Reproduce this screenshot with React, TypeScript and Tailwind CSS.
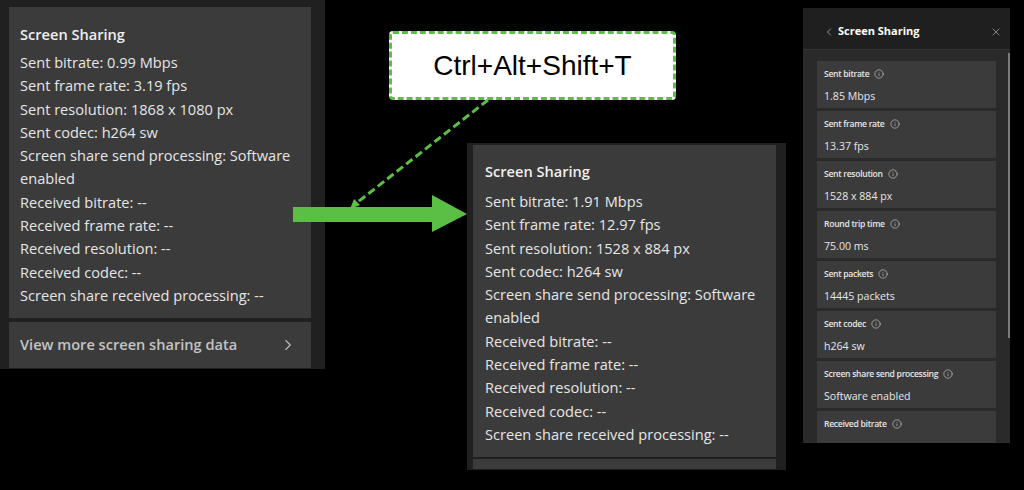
import React from "react";
import { ChevronLeft, ChevronRight, Info, X } from "lucide-react";

const font = { fontFamily: '"Segoe UI", "Open Sans", "Noto Sans", sans-serif' };

const leftLines = [
  "Sent bitrate: 0.99 Mbps",
  "Sent frame rate: 3.19 fps",
  "Sent resolution: 1868 x 1080 px",
  "Sent codec: h264 sw",
  "Screen share send processing: Software enabled",
  "Received bitrate: --",
  "Received frame rate: --",
  "Received resolution: --",
  "Received codec: --",
  "Screen share received processing: --",
];

const midLines = [
  "Sent bitrate: 1.91 Mbps",
  "Sent frame rate: 12.97 fps",
  "Sent resolution: 1528 x 884 px",
  "Sent codec: h264 sw",
  "Screen share send processing: Software enabled",
  "Received bitrate: --",
  "Received frame rate: --",
  "Received resolution: --",
  "Received codec: --",
  "Screen share received processing: --",
];

const cards = [
  { label: "Sent bitrate", value: "1.85 Mbps" },
  { label: "Sent frame rate", value: "13.37 fps" },
  { label: "Sent resolution", value: "1528 x 884 px" },
  { label: "Round trip time", value: "75.00 ms" },
  { label: "Sent packets", value: "14445 packets" },
  { label: "Sent codec", value: "h264 sw" },
  { label: "Screen share send processing", value: "Software enabled" },
  { label: "Received bitrate", value: "" },
];

const StatsList = ({ lines }: { lines: string[] }) => (
  <div className="text-[14.6px] leading-[23.3px] text-[#e6e6e6]">
    {lines.map((l) => (
      <div key={l}>{l}</div>
    ))}
  </div>
);

export default function App() {
  return (
    <div className="relative w-[1024px] h-[490px] bg-black overflow-hidden" style={font}>
      <div className="flex items-start">
        {/* left screenshot */}
        <div className="w-[325px] h-[369px] bg-[#202020] pl-[9px] pr-[14px] pt-[7px] shrink-0">
          <div className="h-[311px] bg-[#3b3b3b] pl-[11px] pr-[8px] pt-[16px]">
            <div className="text-[14.6px] font-semibold leading-[23px] text-[#f0f0f0] mb-[5px]">Screen Sharing</div>
            <StatsList lines={leftLines} />
          </div>
          <div className="mt-[4px] h-[46px] bg-[#3b3b3b] flex items-center justify-between pl-[11px] pr-[14px]">
            <span className="text-[14.6px] font-semibold text-[#c4c4c4]">View more screen sharing data</span>
            <ChevronRight size={18} strokeWidth={1.5} className="text-[#bdbdbd]" />
          </div>
        </div>

        {/* middle screenshot */}
        <div className="ml-[142px] mt-[143px] w-[319px] h-[327px] bg-[#202020] pl-[6px] pr-[10px] pt-[2px] shrink-0">
          <div className="h-[312px] bg-[#3b3b3b] pl-[12px] pr-[8px] pt-[15px]">
            <div className="text-[14.6px] font-semibold leading-[23px] text-[#f0f0f0] mb-[7px]">Screen Sharing</div>
            <StatsList lines={midLines} />
          </div>
          <div className="mt-[2px] h-[10px] bg-[#3b3b3b]" />
        </div>

        {/* right screenshot */}
        <div className="relative ml-[17px] mt-[8px] w-[207px] h-[435px] bg-[#2a2a2a] overflow-hidden shrink-0">
          <div className="h-[42px] bg-[#1f1f1f] border-b border-[#333333] flex items-center pl-[20px] pr-[8px] pt-[6px]">
            <ChevronLeft size={12} strokeWidth={1.5} className="text-[#bdbdbd]" />
            <span className="ml-[3px] text-[11px] font-bold text-white">Screen Sharing</span>
            <X size={12} strokeWidth={1.3} className="ml-auto text-[#bdbdbd]" />
          </div>
          <div className="flex flex-col gap-[3px] pl-[14px] pr-[14px] pt-[11px]">
            {cards.map((c) => (
              <div key={c.label} className="h-[47px] bg-[#3b3b3b] pl-[7px] pt-[7px] shrink-0">
                <div className="flex items-center gap-[5px] h-[12px]">
                  <span className="text-[8.6px] font-semibold tracking-[-0.3px] text-[#e6e6e6]">{c.label}</span>
                  <Info size={10} strokeWidth={1.5} className="text-[#cfcfcf]" />
                </div>
                {c.value && (
                  <div className="mt-[9px] text-[10.6px] leading-[14px] text-[#e6e6e6]">{c.value}</div>
                )}
              </div>
            ))}
          </div>
          <div className="absolute left-[205px] top-[45px] w-[2px] h-[285px] bg-[#7a7a7a]" />
        </div>
      </div>

      {/* callout */}
      <div className="absolute left-[389px] top-[31px] w-[287px] h-[69px] bg-white border-[3px] border-dashed border-[#5bbf45] rounded-[4px] flex items-center justify-center">
        <span className="text-[28px] text-black" style={{ fontFamily: '"Liberation Sans", Arial, sans-serif' }}>
          Ctrl+Alt+Shift+T
        </span>
      </div>

      {/* dashed connector */}
      <svg className="absolute left-[340px] top-[95px]" width="160" height="125" viewBox="0 0 160 125">
        <line x1="148" y1="5" x2="14" y2="110" stroke="#5bbf45" strokeWidth="3" strokeDasharray="8 4" />
        <polygon points="10,114 14,104 20,110" fill="#5bbf45" />
      </svg>

      {/* arrow */}
      <svg className="absolute left-[293px] top-[195px]" width="175" height="38" viewBox="0 0 175 38">
        <polygon points="0,12 139,12 139,0 174,19 139,37 139,27 0,27" fill="#5bbf45" />
      </svg>
    </div>
  );
}
